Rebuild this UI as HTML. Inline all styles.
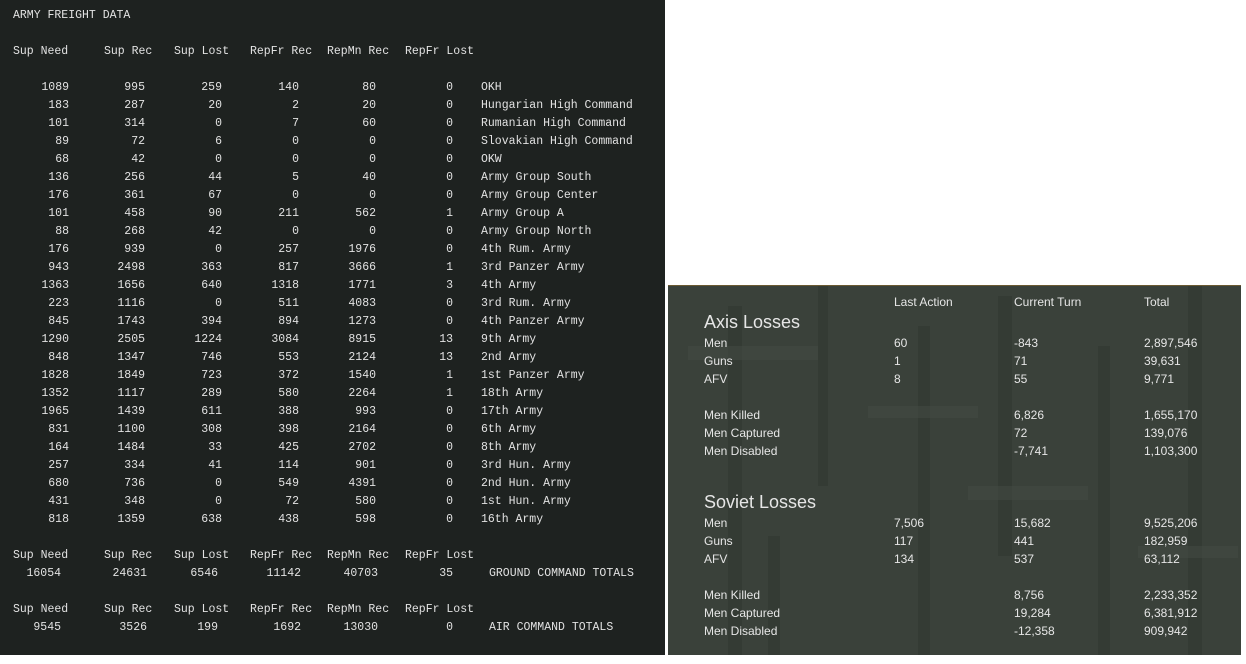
<!DOCTYPE html>
<html><head><meta charset="utf-8"><style>
*{margin:0;padding:0;box-sizing:border-box}
body{width:1246px;height:664px;background:#fff;position:relative;overflow:hidden}
#l{position:absolute;left:0;top:0;width:665px;height:655px;background:#1e2220;font-family:"Liberation Mono",monospace;font-size:11.5px;color:#e2e2e2}
#l span{position:absolute;white-space:pre;line-height:14px;transform:translateY(-6px)}
#rp{position:absolute;left:668px;top:285px;width:573px;height:370px;background:#3a413a;border-top:1px solid #6b5a32;font-family:"Liberation Sans",sans-serif;font-size:12px;color:#e6e6e6;overflow:hidden}
#rp span{position:absolute;white-space:pre;line-height:14px;transform:translateY(-6px)}
#rp .h{font-size:18px;line-height:20px;transform:translateY(-9px)}
.t{position:absolute;background:#2f352f;opacity:.45}
.u{position:absolute;background:#464d46;opacity:.45}
</style></head><body>
<div id="l"></div>
<div id="rp">
<div class="t" style="left:60px;top:20px;width:14px;height:350px"></div>
<div class="u" style="left:20px;top:60px;width:130px;height:14px"></div>
<div class="t" style="left:150px;top:0;width:10px;height:200px"></div>
<div class="t" style="left:250px;top:40px;width:12px;height:330px"></div>
<div class="u" style="left:200px;top:120px;width:110px;height:12px"></div>
<div class="t" style="left:330px;top:10px;width:14px;height:260px"></div>
<div class="u" style="left:300px;top:200px;width:120px;height:14px"></div>
<div class="t" style="left:430px;top:60px;width:12px;height:310px"></div>
<div class="t" style="left:520px;top:0;width:14px;height:370px"></div>
<div class="u" style="left:470px;top:260px;width:100px;height:12px"></div>
<div class="t" style="left:100px;top:250px;width:12px;height:120px"></div>
</div>
<script>
const L=document.getElementById('l');
function s(x,y,t,right){const e=document.createElement('span');e.textContent=t;if(right){e.style.right=(665-x)+'px'}else e.style.left=x+'px';e.style.top=y+'px';L.appendChild(e);}
s(13,15,'ARMY FREIGHT DATA');
const H=[[13,'Sup Need'],[104,'Sup Rec'],[174,'Sup Lost'],[250,'RepFr Rec'],[327,'RepMn Rec'],[405,'RepFr Lost']];
[51,555,609].forEach(y=>H.forEach(h=>s(h[0],y,h[1])));
const R=[69,145,222,299,376,453];
const D=`1089 995 259 140 80 0 OKH
183 287 20 2 20 0 Hungarian High Command
101 314 0 7 60 0 Rumanian High Command
89 72 6 0 0 0 Slovakian High Command
68 42 0 0 0 0 OKW
136 256 44 5 40 0 Army Group South
176 361 67 0 0 0 Army Group Center
101 458 90 211 562 1 Army Group A
88 268 42 0 0 0 Army Group North
176 939 0 257 1976 0 4th Rum. Army
943 2498 363 817 3666 1 3rd Panzer Army
1363 1656 640 1318 1771 3 4th Army
223 1116 0 511 4083 0 3rd Rum. Army
845 1743 394 894 1273 0 4th Panzer Army
1290 2505 1224 3084 8915 13 9th Army
848 1347 746 553 2124 13 2nd Army
1828 1849 723 372 1540 1 1st Panzer Army
1352 1117 289 580 2264 1 18th Army
1965 1439 611 388 993 0 17th Army
831 1100 308 398 2164 0 6th Army
164 1484 33 425 2702 0 8th Army
257 334 41 114 901 0 3rd Hun. Army
680 736 0 549 4391 0 2nd Hun. Army
431 348 0 72 580 0 1st Hun. Army
818 1359 638 438 598 0 16th Army`.split('\n');
D.forEach((l,i)=>{const p=l.split(' ');const y=87+18*i;for(let j=0;j<6;j++)s(R[j],y,p[j],1);s(481,y,p.slice(6).join(' '));});
const R2=[61,147,218,301,378,453];
[[573,'16054 24631 6546 11142 40703 35','GROUND COMMAND TOTALS'],[627,'9545 3526 199 1692 13030 0','AIR COMMAND TOTALS']].forEach(t=>{t[1].split(' ').forEach((v,j)=>s(R2[j],t[0],v,1));s(489,t[0],t[2]);});
const P=document.getElementById('rp');
function q(x,y,t,c){const e=document.createElement('span');e.textContent=t;if(c)e.className=c;e.style.left=(x-668)+'px';e.style.top=(y-286)+'px';P.appendChild(e);}
q(894,301,'Last Action');q(1014,301,'Current Turn');q(1144,301,'Total');
q(704,321,'Axis Losses','h');q(704,501,'Soviet Losses','h');
const rows=[[342,'Men','60','-843','2,897,546'],[360,'Guns','1','71','39,631'],[378,'AFV','8','55','9,771'],
[414,'Men Killed','','6,826','1,655,170'],[432,'Men Captured','','72','139,076'],[450,'Men Disabled','','-7,741','1,103,300'],
[522,'Men','7,506','15,682','9,525,206'],[540,'Guns','117','441','182,959'],[558,'AFV','134','537','63,112'],
[594,'Men Killed','','8,756','2,233,352'],[612,'Men Captured','','19,284','6,381,912'],[630,'Men Disabled','','-12,358','909,942']];
rows.forEach(r=>{q(704,r[0],r[1]);if(r[2])q(894,r[0],r[2]);q(1014,r[0],r[3]);q(1144,r[0],r[4]);});
</script>
</body></html>
